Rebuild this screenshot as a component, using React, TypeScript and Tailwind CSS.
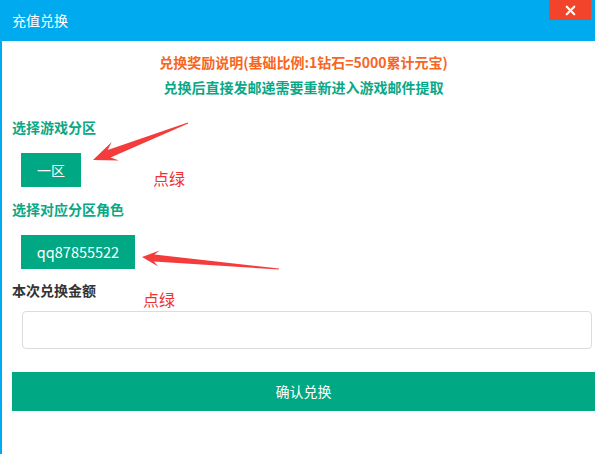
import { X } from "lucide-react";

type Pt = [number, number];

// Paint-style annotation arrow: tapering shaft with a swept head.
function arrowPoints(tail: Pt, tip: Pt, headLen: number, headHalf: number, neck: number, tailW: number) {
  const dx = tail[0] - tip[0];
  const dy = tail[1] - tip[1];
  const len = Math.hypot(dx, dy);
  const u: Pt = [dx / len, dy / len];
  const n: Pt = [-u[1], u[0]];
  const at = (along: number, side: number): Pt => [
    tip[0] + u[0] * along + n[0] * side,
    tip[1] + u[1] * along + n[1] * side,
  ];
  const pts: Pt[] = [
    tip,
    at(headLen, headHalf),
    at(headLen * 0.72, neck),
    at(len, tailW),
    at(len, -tailW),
    at(headLen * 0.72, -neck),
    at(headLen, -headHalf),
  ];
  return pts.map((p) => `${p[0].toFixed(1)},${p[1].toFixed(1)}`).join(" ");
}

const FONT = { fontFamily: '"Noto Sans CJK SC", "Noto Sans", sans-serif' };

export default function App() {
  return (
    <div className="relative h-[454px] w-[595px] overflow-hidden bg-white" style={FONT}>
      <div className="flex h-[41px] items-center justify-between bg-[#00aaef] pl-[12px]">
        <span className="text-[14px] text-white">充值兑换</span>
        <button className="mr-[4px] flex h-[20px] w-[42px] items-center justify-center self-start bg-[#f2442a] text-white">
          <X size={15} strokeWidth={3.5} />
        </button>
      </div>

      <div className="flex h-[413px] flex-col border-l-2 border-[#00aaef] pl-[10px]">
        <p className="mt-[11px] text-center text-[14px] leading-[20px] font-bold text-[#f7661f]">
          兑换奖励说明(基础比例:1钻石=5000累计元宝)
        </p>
        <p className="mt-[5px] text-center text-[14px] leading-[20px] font-bold text-[#0aa886]">
          兑换后直接发邮递需要重新进入游戏邮件提取
        </p>

        <p className="mt-[20px] text-[14px] leading-[20px] font-bold text-[#0aa886]">选择游戏分区</p>
        <div className="mt-[16px] ml-[9px] flex">
          <button className="h-[34px] w-[60px] bg-[#00a884] text-[14px] text-white">一区</button>
        </div>

        <p className="mt-[12px] text-[14px] leading-[20px] font-bold text-[#0aa886]">选择对应分区角色</p>
        <div className="mt-[16px] ml-[9px] flex">
          <button className="h-[34px] w-[114px] bg-[#00a884] text-[14.5px] text-white">qq87855522</button>
        </div>

        <p className="mt-[11px] text-[14px] leading-[20px] font-bold text-[#333333]">本次兑换金额</p>
        <input
          className="mt-[11px] ml-[10px] mr-[3px] h-[38px] rounded-[4px] border border-[#dcdcdc] px-3 text-[14px] outline-none"
          type="text"
        />

        <button className="mt-[23px] h-[39px] bg-[#00a884] text-[14px] text-white">确认兑换</button>
      </div>

      <span className="absolute top-[167px] left-[153px] text-[16px] leading-[22px] text-[#ee3333]">点绿</span>
      <span className="absolute top-[288px] left-[143px] text-[16px] leading-[22px] text-[#ee3333]">点绿</span>

      <svg className="pointer-events-none absolute inset-0" width={595} height={454}>
        <polygon points={arrowPoints([188, 123], [93, 160], 24, 10, 4, 0.6)} fill="#f53c3c" />
        <polygon points={arrowPoints([279, 269], [142, 257], 17, 8, 3.5, 0.5)} fill="#f53c3c" />
      </svg>
    </div>
  );
}
